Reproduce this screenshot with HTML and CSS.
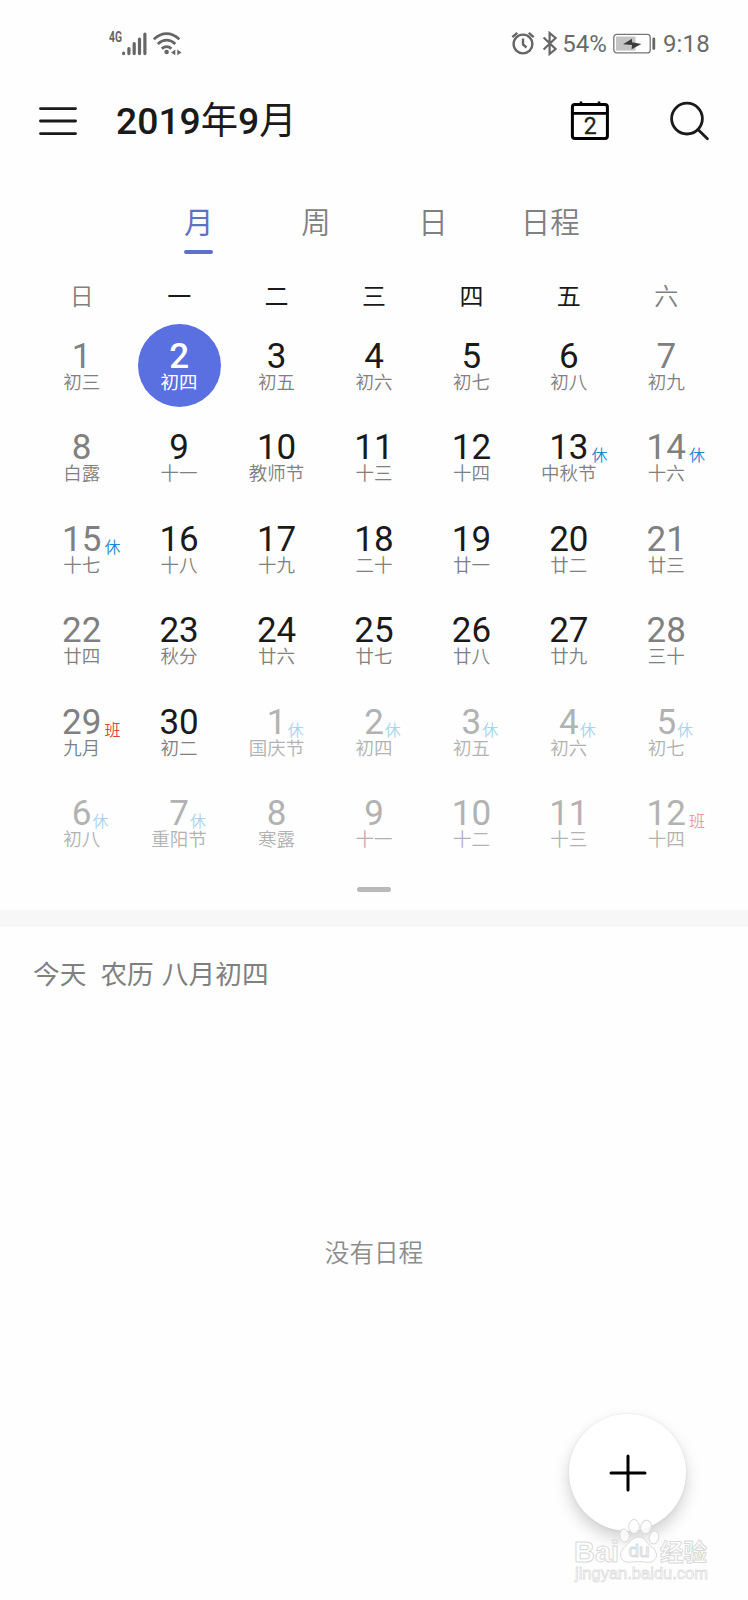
FILE: index.html
```html
<!DOCTYPE html>
<html lang="zh-CN">
  <head>
    <meta charset="UTF-8" />
    <title>日历</title>
    <link rel="stylesheet" href="styles.css">
  </head>
  <body>
    <div class="status-bar">
      <svg class="status-left" width="76" height="28" viewBox="0 0 76 28">
        <text x="0" y="12" class="net-label" textLength="13" lengthAdjust="spacingAndGlyphs">4G</text>
        <g stroke="#666" stroke-width="3.2" stroke-linecap="round">
          <path d="M14.6 23v.6M19.9 18.5v5.1M25.2 13.5v10.1M30.5 9v14.6M35.9 4v19.6" />
        </g>
        <g fill="none" stroke="#666" stroke-width="2.7">
          <path d="M44.8 9.2q12.8-11 25.6 0M48.8 14q8.8-7.6 17.6 0M52.8 18.6q4.8-4 9.6 0" />
        </g>
        <circle cx="57.6" cy="22" r="2.3" fill="#666" />
        <path d="M66.3 19.6v5.6l-4.2-2.8zM68.3 19.6v5.6l4.2-2.8z" fill="#666" />
      </svg>
      <div class="status-right">
        <svg width="24" height="26" viewBox="0 0 24 26" fill="none" stroke="#666" stroke-width="2.4">
          <circle cx="12" cy="13" r="9.4" />
          <path d="M12 7.5v6l3.5 3M1.3 6.2l5-4.3M22.7 6.2l-5-4.3" />
        </svg>
        <svg class="bluetooth" width="16" height="26" viewBox="0 0 16 26" fill="none" stroke="#666" stroke-width="2.2">
          <path d="M1.6 6.5l12 11.5-6 5V2l6 5-12 11.5" />
        </svg>
        <span class="percent">54%</span>
        <svg class="battery" width="43" height="22" viewBox="0 0 43 22">
          <rect x="0.8" y="1.3" width="36.4" height="18.6" rx="3" fill="none" stroke="#777" stroke-width="1.3" />
          <rect x="3" y="3.6" width="19.5" height="14" fill="#c4c4c4" />
          <path d="M10 11.2l9-5.4v3.4l9.4 1.8-9.8 5.2.4-4.2z" fill="#3c3c3c" />
          <path d="M40.8 6v9.6" stroke="#666" stroke-width="2.8" stroke-linecap="round" />
        </svg>
        <span class="clock">9:18</span>
      </div>
    </div>

    <div class="header">
      <svg width="38" height="30" viewBox="0 0 38 30" stroke="#1a1a1a" stroke-width="2.9" stroke-linecap="round">
        <path d="M1.5 2.6h35M1.5 15h35M1.5 27.6h35" />
      </svg>
      <h1>2019<span>年</span>9<span>月</span></h1>
      <svg class="today-icon" width="40" height="42" viewBox="0 0 40 42">
        <rect x="2.4" y="4.4" width="35" height="34" rx="2.5" fill="none" stroke="#000" stroke-width="3" />
        <path d="M2 13.4h36M11 1.5v3M29 1.5v3" stroke="#000" stroke-width="2.6" />
        <text x="20.3" y="34.2" text-anchor="middle">2</text>
      </svg>
      <svg width="42" height="42" viewBox="0 0 42 42" fill="none" stroke="#1a1a1a" stroke-width="2.8" stroke-linecap="round">
        <circle cx="18" cy="18.6" r="15.4" />
        <path d="M29 29.6l9.4 9.2" />
      </svg>
    </div>

    <div class="tabs">
      <a class="active">月</a>
      <a>周</a>
      <a>日</a>
      <a>日程</a>
    </div>

    <div class="weekdays">
      <span class="weekend">日</span>
      <span>一</span>
      <span>二</span>
      <span>三</span>
      <span>四</span>
      <span>五</span>
      <span class="weekend">六</span>
    </div>

    <div class="month">
      <div class="day weekend"><b>1</b><small>初三</small></div>
      <div class="day today"><b>2</b><small>初四</small></div>
      <div class="day"><b>3</b><small>初五</small></div>
      <div class="day"><b>4</b><small>初六</small></div>
      <div class="day"><b>5</b><small>初七</small></div>
      <div class="day"><b>6</b><small>初八</small></div>
      <div class="day weekend"><b>7</b><small>初九</small></div>

      <div class="day weekend"><b>8</b><small>白露</small></div>
      <div class="day"><b>9</b><small>十一</small></div>
      <div class="day"><b>10</b><small>教师节</small></div>
      <div class="day"><b>11</b><small>十三</small></div>
      <div class="day"><b>12</b><small>十四</small></div>
      <div class="day"><b>13<i class="rest">休</i></b><small>中秋节</small></div>
      <div class="day weekend"><b>14<i class="rest">休</i></b><small>十六</small></div>

      <div class="day weekend"><b>15<i class="rest">休</i></b><small>十七</small></div>
      <div class="day"><b>16</b><small>十八</small></div>
      <div class="day"><b>17</b><small>十九</small></div>
      <div class="day"><b>18</b><small>二十</small></div>
      <div class="day"><b>19</b><small>廿一</small></div>
      <div class="day"><b>20</b><small>廿二</small></div>
      <div class="day weekend"><b>21</b><small>廿三</small></div>

      <div class="day weekend"><b>22</b><small>廿四</small></div>
      <div class="day"><b>23</b><small>秋分</small></div>
      <div class="day"><b>24</b><small>廿六</small></div>
      <div class="day"><b>25</b><small>廿七</small></div>
      <div class="day"><b>26</b><small>廿八</small></div>
      <div class="day"><b>27</b><small>廿九</small></div>
      <div class="day weekend"><b>28</b><small>三十</small></div>

      <div class="day weekend"><b>29<i class="work">班</i></b><small>九月</small></div>
      <div class="day"><b>30</b><small>初二</small></div>
      <div class="day other"><b>1<i class="rest">休</i></b><small>国庆节</small></div>
      <div class="day other"><b>2<i class="rest">休</i></b><small>初四</small></div>
      <div class="day other"><b>3<i class="rest">休</i></b><small>初五</small></div>
      <div class="day other"><b>4<i class="rest">休</i></b><small>初六</small></div>
      <div class="day other"><b>5<i class="rest">休</i></b><small>初七</small></div>

      <div class="day other"><b>6<i class="rest">休</i></b><small>初八</small></div>
      <div class="day other"><b>7<i class="rest">休</i></b><small>重阳节</small></div>
      <div class="day other"><b>8</b><small>寒露</small></div>
      <div class="day other"><b>9</b><small>十一</small></div>
      <div class="day other"><b>10</b><small>十二</small></div>
      <div class="day other"><b>11</b><small>十三</small></div>
      <div class="day other"><b>12<i class="work">班</i></b><small>十四</small></div>
    </div>

    <div class="handle"></div>
    <div class="divider"></div>

    <div class="agenda">
      <div class="agenda-title"><span>今天</span><span>农历 八月初四</span></div>
      <p class="empty">没有日程</p>
    </div>

    <div class="add-button">
      <svg width="38" height="38" viewBox="0 0 38 38" stroke="#000" stroke-width="3" stroke-linecap="round">
        <path d="M19 2v34M2 19h34" />
      </svg>
    </div>

    <svg class="watermark" width="142" height="72" viewBox="0 0 142 72">
      <g fill="#fff" fill-opacity="0.8" stroke="#d9d9d9" stroke-width="1">
        <text class="wm-bai" x="3" y="43.5" textLength="45" lengthAdjust="spacingAndGlyphs">Bai</text>
        <ellipse cx="53.5" cy="17.5" rx="4.8" ry="6.5" transform="rotate(-8 53.5 17.5)" />
        <ellipse cx="63" cy="8.5" rx="5.3" ry="7" />
        <ellipse cx="75" cy="9" rx="5.3" ry="6.8" transform="rotate(12 75 9)" />
        <ellipse cx="83" cy="19.5" rx="4.8" ry="6.5" transform="rotate(14 83 19.5)" />
        <path d="M67.5 19c6 0 8 6 12 9 5 4 7.500 8 5 12.500-3.500 6-10 3-17 3s-13.500 3-17-3c-2.500-4.500 0-8.500 4-12.500 4-3 7-9 13-9z" />
        <text class="wm-du" x="68" y="39" text-anchor="middle">du</text>
        <text class="wm-cn" x="89" y="43" textLength="47" lengthAdjust="spacingAndGlyphs">经验</text>
      </g>
      <text class="wm-url" x="4" y="61" textLength="133" lengthAdjust="spacingAndGlyphs">jingyan.baidu.com</text>
    </svg>
  </body>
</html>
```
FILE: styles.css
```css
* {
  box-sizing: border-box;
}

body {
  position: relative;
  margin: 0;
  width: 748px;
  height: 1600px;
  overflow: hidden;
  background-color: #fefefe;
  color: #1a1a1a;
  font-family: Roboto, "Noto Sans CJK SC", sans-serif;
}

svg {
  display: block;
  flex-shrink: 0;
}

/* status bar */
.status-bar {
  display: flex;
  justify-content: space-between;
  align-items: center;
  height: 88px;
  padding: 0 38px 0 109px;
  color: #6a6a6a;
  font-size: 24px;
}

.net-label {
  font-size: 14px;
  font-weight: bold;
  fill: #666;
}

.status-left {
  margin-top: -1px;
}

.status-right {
  display: flex;
  align-items: center;
}

.bluetooth {
  margin-left: 7px;
}

.percent {
  margin-left: 4px;
}

.battery {
  margin-left: 6px;
}

.clock {
  margin-left: 7px;
  letter-spacing: 0.2px;
}

/* header */
.header {
  display: flex;
  align-items: center;
  height: 65px;
  padding: 0 37px 0 39px;
}

.header h1 {
  flex: 1;
  margin: 1px 0 0 39px;
  font-size: 37.3px;
  font-weight: 500;
  line-height: 50px;
}

.header h1 span {
  font-weight: 400;
}

.today-icon {
  margin-right: 59px;
}

.today-icon text {
  font-size: 23px;
  fill: #222;
  stroke: #222;
  stroke-width: 0.3px;
}

/* view tabs */
.tabs {
  display: flex;
  justify-content: center;
  height: 103px;
  padding: 50px 0 0 1px;
}

.tabs a {
  display: flex;
  flex-direction: column;
  align-items: center;
  width: 117.2px;
  color: #808080;
  font-size: 29.5px;
  font-weight: 350;
  line-height: 40px;
}

.tabs .active {
  color: #5f71c6;
  font-weight: 400;
}

.tabs .active::after {
  content: "";
  width: 29px;
  height: 4px;
  margin-top: 7px;
  border-radius: 2px;
  background-color: #5f71c6;
}

/* month grid */
.weekdays {
  display: grid;
  grid-template-columns: repeat(7, 1fr);
  height: 68px;
  padding: 0 33px;
  text-align: center;
  font-size: 24px;
  line-height: 83px;
}

.weekdays .weekend {
  color: #808080;
  font-weight: 350;
}

.month {
  display: grid;
  grid-template-columns: repeat(7, 1fr);
  grid-auto-rows: 91.4px;
  padding: 0 33px;
}

.day {
  display: flex;
  flex-direction: column;
  align-items: center;
  justify-self: center;
  width: 83px;
  height: 83px;
  padding-top: 15px;
}

.day b {
  position: relative;
  font-size: 35px;
  font-weight: 400;
  line-height: 36px;
}

.day small {
  margin-top: -1px;
  color: #808080;
  font-size: 18.5px;
  font-weight: 350;
  line-height: 18px;
  white-space: nowrap;
}

.day i {
  position: absolute;
  left: 100%;
  top: 16px;
  margin-left: 3px;
  font-size: 16px;
  font-style: normal;
  font-weight: 350;
  line-height: 20px;
}

.weekend b {
  color: #808080;
}

.today {
  border-radius: 50%;
  background-color: #5a6fe0;
}

.today b {
  color: #fff;
  font-weight: 500;
}

.today small {
  color: #fff;
  font-weight: 400;
}

.day .rest {
  color: #1f86cf;
}

.day .work {
  color: #dc4437;
}

.other b,
.other small {
  color: #b2b2b2;
}

/* single digit dates, badge sits a bit closer */
.other .rest {
  margin-left: 1px;
  color: #a8d3f0;
}

.other .work {
  color: #ee9a92;
}

.handle {
  width: 34px;
  height: 5px;
  margin: 15px auto 18px;
  border-radius: 3px;
  background-color: #b9b9b9;
}

.divider {
  height: 17px;
  background-color: #f7f7f7;
}

/* agenda */
.agenda {
  padding: 28px 33px;
}

.agenda-title {
  display: flex;
  gap: 14px;
  color: #808080;
  font-size: 26.7px;
  line-height: 40px;
  word-spacing: 1.5px;
}

.empty {
  margin: 239px 0 0;
  color: #8c8c8c;
  text-align: center;
  font-size: 24.6px;
  font-weight: 350;
  line-height: 40px;
}

.add-button {
  position: absolute;
  left: 569px;
  top: 1414px;
  display: flex;
  align-items: center;
  justify-content: center;
  width: 117px;
  height: 117px;
  border-radius: 50%;
  background-color: #fff;
  box-shadow: 0 8px 16px rgba(0, 0, 0, 0.18), 0 0 3px rgba(0, 0, 0, 0.08);
}

.watermark {
  position: absolute;
  left: 571px;
  top: 1518px;
}

.wm-bai {
  font-family: "Liberation Sans", sans-serif;
  font-size: 30px;
  font-weight: bold;
}

.wm-du {
  font-family: "Liberation Sans", sans-serif;
  font-size: 19px;
}

.wm-cn {
  font-size: 24px;
  font-weight: bold;
}

.wm-url {
  font-family: "Liberation Sans", sans-serif;
  font-size: 16px;
  fill: #fff;
  stroke: #dedede;
  stroke-width: 0.8px;
}
```
